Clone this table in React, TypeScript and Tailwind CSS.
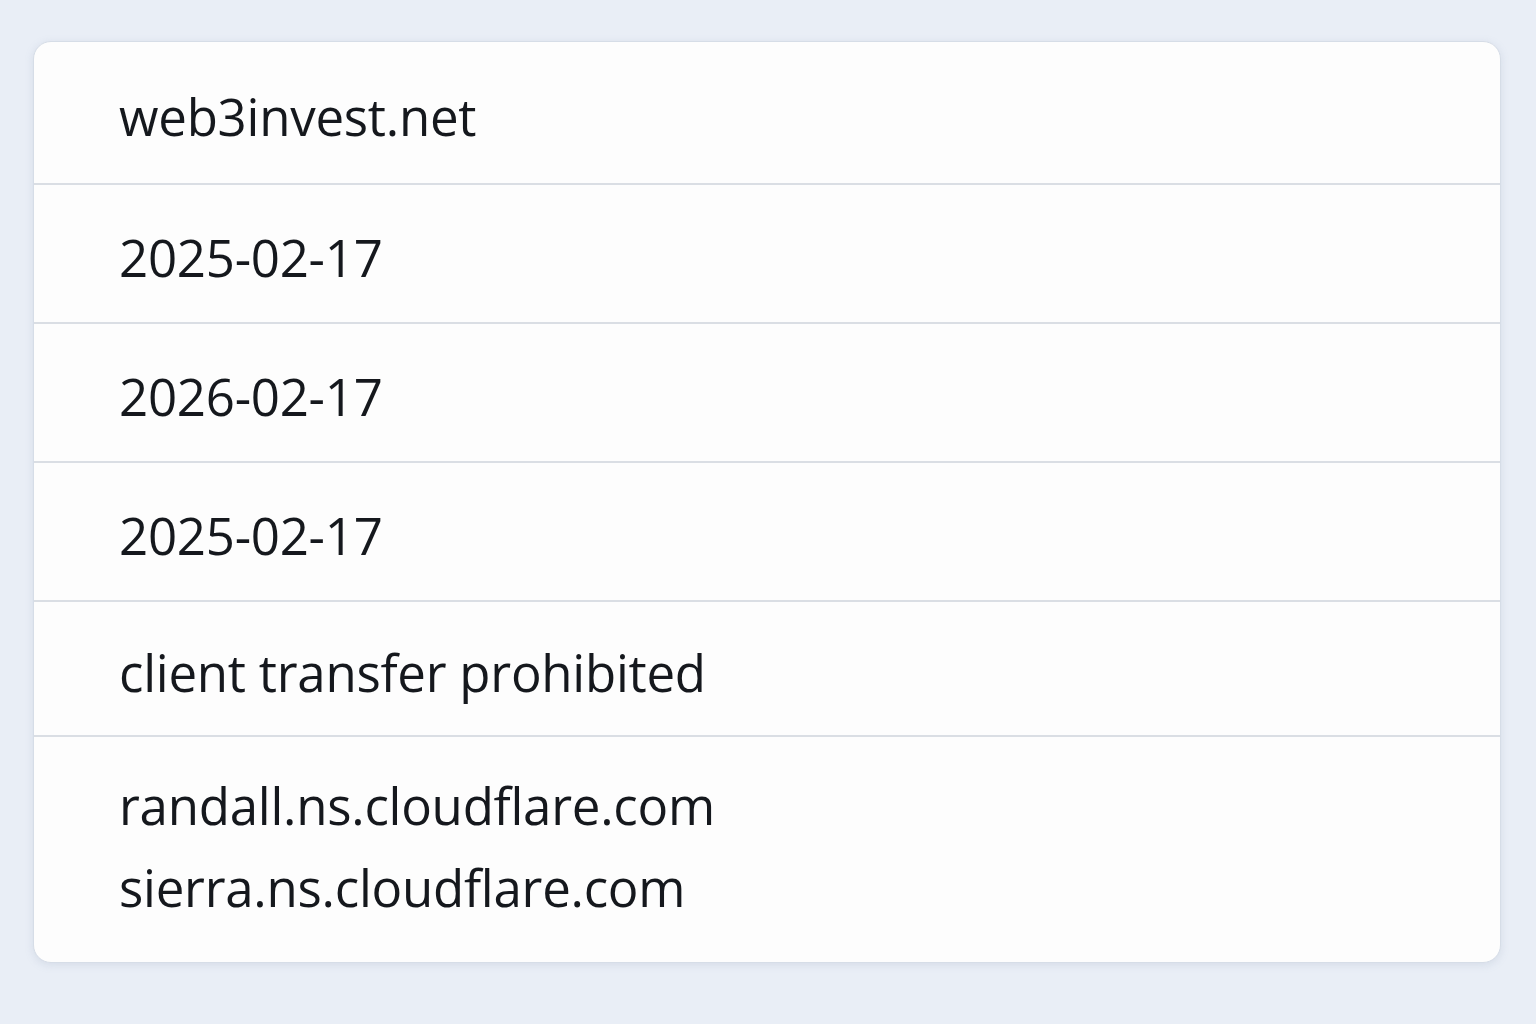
import React from "react";

const rows: { lines: string[]; h: string; pad: string }[] = [
  { lines: ["web3invest.net"], h: "h-[143px]", pad: "pt-[6px]" },
  { lines: ["2025-02-17"], h: "h-[139px]", pad: "pt-[6px]" },
  { lines: ["2026-02-17"], h: "h-[139px]", pad: "pt-[6px]" },
  { lines: ["2025-02-17"], h: "h-[139px]", pad: "pt-[6px]" },
  { lines: ["client transfer prohibited"], h: "h-[135px]", pad: "pt-[6px]" },
  { lines: ["randall.ns.cloudflare.com", "sierra.ns.cloudflare.com"], h: "h-[225px]", pad: "pb-[8px]" },
];

export default function App() {
  return (
    <div className="min-h-screen w-full bg-[#e9eef6] pt-[41px] pl-[33px]" style={{ fontFamily: '"Open Sans", "Noto Sans", sans-serif' }}>
      <div className="w-[1468px] rounded-[18px] border border-[#d6dde7] bg-[#fdfdfd] shadow-[0_2px_8px_rgba(120,140,170,0.18)] overflow-hidden">
        {rows.map((r, i) => (
          <div
            key={i}
            className={`${r.h} ${r.pad} flex flex-col justify-center pl-[85px] text-[51px] leading-[82px] tracking-[-0.25px] text-[#15181d] ${i < rows.length - 1 ? "border-b-2 border-[#dadee4]" : ""}`}
          >
            {r.lines.map((l) => (
              <div key={l}>{l}</div>
            ))}
          </div>
        ))}
      </div>
    </div>
  );
}
